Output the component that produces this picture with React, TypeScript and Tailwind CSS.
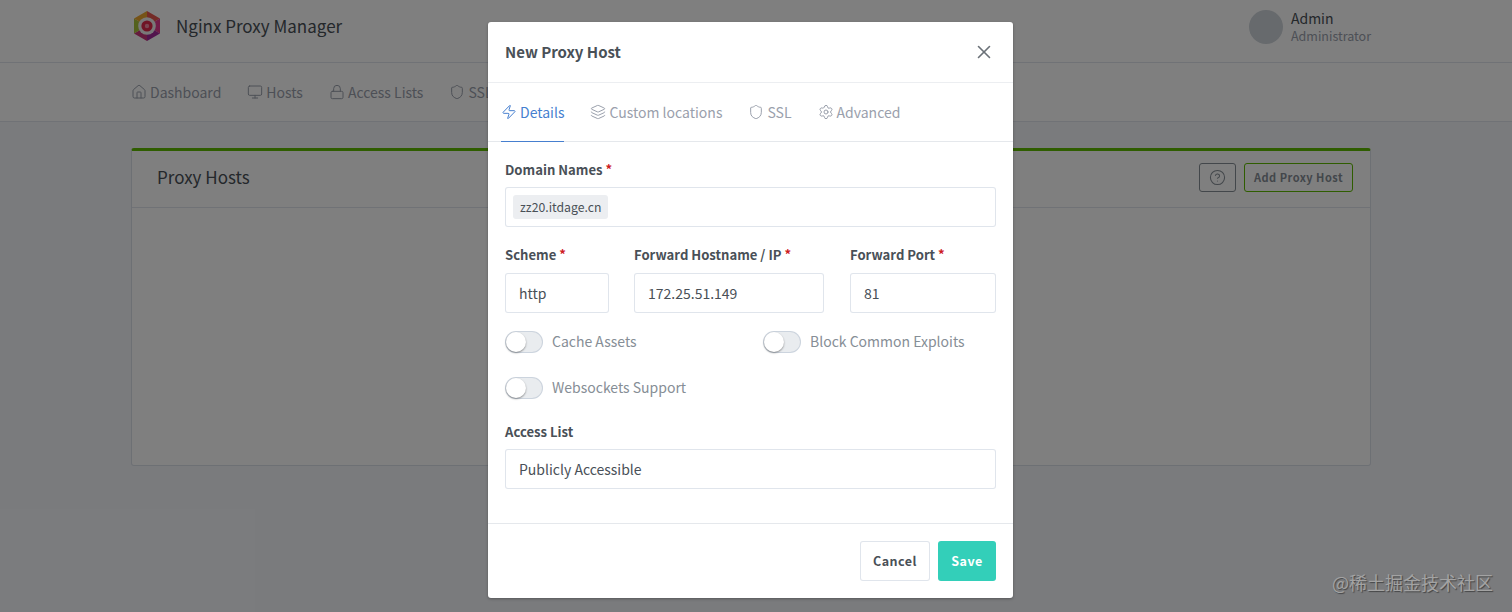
import { House, Monitor, Lock, Shield, Zap, Layers, Settings, X, CircleHelp } from "lucide-react";

const font = { fontFamily: '"Noto Sans CJK SC", "Noto Sans", sans-serif' };

function Logo() {
  return (
    <svg width="30" height="32" viewBox="0 0 30 32" className="shrink-0">
      <path d="M15 16 L15 1 L28 8.5 Z" fill="#e8574f" />
      <path d="M15 16 L28 8.5 V23.5 Z" fill="#e2398f" />
      <path d="M15 16 L28 23.5 L15 31 Z" fill="#a5289a" />
      <path d="M15 16 L15 31 L2 23.5 Z" fill="#c9367a" />
      <path d="M15 16 L2 23.5 V8.5 Z" fill="#a9c23a" />
      <path d="M15 16 L2 8.5 L15 1 Z" fill="#eda72e" />
      <circle cx="15" cy="16" r="8.8" fill="#f2f0f1" />
      <circle cx="15" cy="16" r="5.6" fill="#e0284a" />
      <circle cx="15" cy="16" r="2.2" fill="#f58aa0" />
    </svg>
  );
}

function NavItem({ icon: I, label }: { icon: any; label: string }) {
  return (
    <div className="flex items-center gap-[3px]">
      <I size={16} strokeWidth={1.5} />
      <span>{label}</span>
    </div>
  );
}

function Tab({ icon: I, label, active }: { icon: any; label: string; active?: boolean }) {
  return (
    <div
      className={`flex h-[59px] items-center gap-[3px] -mb-px border-b ${
        active ? "text-[#467fcf] border-[#467fcf]" : "text-[#9aa0ac] border-transparent"
      }`}
    >
      <I size={16} strokeWidth={1.5} />
      <span>{label}</span>
    </div>
  );
}

function Label({ text, req, className = "" }: { text: string; req?: boolean; className?: string }) {
  return (
    <div className={`h-[20px] text-[13.1px] leading-[20px] font-bold text-[#495057] ${className}`}>
      {text}
      {req && <span className="text-[#cd201f]"> *</span>}
    </div>
  );
}

function Input({ value }: { value: string }) {
  return (
    <div className="flex h-[40px] items-center rounded-[3px] border border-[rgba(0,40,100,0.12)] bg-white pl-[13px] text-[14px] text-[#495057]">
      {value}
    </div>
  );
}

function Toggle({ label }: { label: string }) {
  return (
    <div className="flex h-[22px] items-center gap-[9px]">
      <div className="relative h-[22px] w-[38px] rounded-full border border-[rgba(0,40,100,0.12)] bg-[#e9ecef]">
        <div className="absolute left-0 top-0 h-[20px] w-[20px] rounded-full bg-white shadow-[0_1px_2px_rgba(0,0,0,0.4)]" />
      </div>
      <span className="-mt-[2px] text-[14px] text-[#868e96]">{label}</span>
    </div>
  );
}

export default function App() {
  return (
    <div style={font} className="relative h-[612px] w-[1512px] overflow-hidden bg-[#f5f7fb]">
      <header className="flex h-[63px] items-center justify-between border-b border-[rgba(0,40,100,0.12)] bg-white pl-[132px] pr-[141px]">
        <div className="-mt-[11px] flex items-center gap-[14px]">
          <Logo />
          <span className="text-[17px] text-[#495057]">Nginx Proxy Manager</span>
        </div>
        <div className="-mt-[8px] flex items-center gap-[8px]">
          <div className="h-[34px] w-[34px] rounded-full bg-[#ced4da]" />
          <div className="flex flex-col">
            <span className="text-[14px] leading-[18px] text-[#495057]">Admin</span>
            <span className="text-[12.5px] leading-[18px] text-[#9aa0ac]">Administrator</span>
          </div>
        </div>
      </header>

      <nav className="flex h-[59px] items-center gap-[26px] border-b border-[rgba(0,40,100,0.12)] bg-white pl-[131px] text-[14px] text-[#9aa0ac]">
        <NavItem icon={House} label="Dashboard" />
        <NavItem icon={Monitor} label="Hosts" />
        <NavItem icon={Lock} label="Access Lists" />
        <NavItem icon={Shield} label="SSL Certificates" />
      </nav>

      <main className="px-[131px] pt-[26px]">
        <section className="h-[318px] w-[1240px] rounded-[3px] border border-[rgba(0,40,100,0.14)] border-t-[3px] border-t-[#5eba00] bg-white">
          <div className="flex h-[57px] items-center justify-between border-b border-[rgba(0,40,100,0.12)] pb-[4px] pl-[25px] pr-[17px]">
            <h2 className="text-[17px] text-[#495057]">Proxy Hosts</h2>
            <div className="flex items-center gap-[8px]">
              <div className="flex h-[29px] w-[37px] items-center justify-center rounded-[3px] border border-[#868e96] text-[#868e96]">
                <CircleHelp size={17} strokeWidth={1.5} />
              </div>
              <div className="flex h-[29px] w-[109px] items-center justify-center rounded-[3px] border border-[#5eba00] text-[11px] font-bold tracking-[0.5px] text-[#868e96]">
                Add Proxy Host
              </div>
            </div>
          </div>
        </section>
      </main>

      <div className="absolute inset-0 bg-black/50 pl-[488px] pt-[22px]">
        <div className="flex h-[576px] w-[525px] flex-col rounded-[3px] bg-white shadow-[0_1px_3px_rgba(0,0,0,0.3)]">
          <div className="flex h-[61px] shrink-0 items-center justify-between border-b border-[#eceef1] pl-[17px] pr-[18px]">
            <span className="text-[15px] font-bold text-[#495057]">New Proxy Host</span>
            <X size={22} strokeWidth={1.75} className="text-[#6b7178]" />
          </div>

          <div className="flex h-[59px] shrink-0 gap-[26px] border-b border-[#e5e8ec] pl-[13px] text-[14px]">
            <Tab icon={Zap} label="Details" active />
            <Tab icon={Layers} label="Custom locations" />
            <Tab icon={Shield} label="SSL" />
            <Tab icon={Settings} label="Advanced" />
          </div>

          <div className="flex-1 px-[17px] pt-[18px]">
            <Label text="Domain Names" req className="mb-[7px]" />
            <div className="flex h-[40px] items-center rounded-[3px] border border-[rgba(0,40,100,0.12)] bg-white pl-[7px]">
              <span className="flex h-[24px] items-center rounded-[3px] bg-[#eceef1] px-[7px] text-[12.25px] text-[#495057]">
                zz20.itdage.cn
              </span>
            </div>

            <div className="mt-[18px] grid grid-cols-[129px_216px_146px]">
              <div className="pr-[25px]">
                <Label text="Scheme" req className="mb-[8px]" />
                <Input value="http" />
              </div>
              <div className="pr-[26px]">
                <Label text="Forward Hostname / IP" req className="mb-[8px]" />
                <Input value="172.25.51.149" />
              </div>
              <div>
                <Label text="Forward Port" req className="mb-[8px]" />
                <Input value="81" />
              </div>
            </div>

            <div className="mt-[18px] grid grid-cols-[258px_1fr] gap-y-[24px]">
              <Toggle label="Cache Assets" />
              <Toggle label="Block Common Exploits" />
              <Toggle label="Websockets Support" />
            </div>

            <Label text="Access List" className="mb-[7px] mt-[23px]" />
            <Input value="Publicly Accessible" />
          </div>

          <div className="flex h-[75px] shrink-0 items-start justify-end gap-[8px] border-t border-[#e5e8ec] px-[17px] pt-[17px]">
            <div className="flex h-[40px] w-[70px] items-center justify-center rounded-[3px] border border-[rgba(0,40,100,0.12)] bg-white text-[12.5px] font-bold tracking-[0.5px] text-[#495057]">
              Cancel
            </div>
            <div className="flex h-[40px] w-[58px] items-center justify-center rounded-[3px] bg-[#33cfb9] text-[12.5px] font-bold tracking-[0.5px] text-white">
              Save
            </div>
          </div>
        </div>
      </div>

      <div className="absolute right-[19px] top-[570px] text-[18px] leading-[24px] text-[#a3a3a3] [text-shadow:1px_1px_1px_rgba(0,0,0,0.45)]">
        @稀土掘金技术社区
      </div>
    </div>
  );
}
